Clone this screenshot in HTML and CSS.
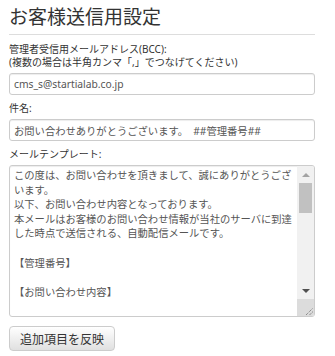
FILE: index.html
```html
<!DOCTYPE html>
<html lang="ja">
<head>
<meta charset="utf-8">
<title>お客様送信用設定</title>
<link rel="stylesheet" href="styles.css">
</head>
<body>
<div class="page">
  <h1 class="title">お客様送信用設定</h1>
  <hr class="rule">
  <div class="field field-first">
    <label class="label" for="bcc">管理者受信用メールアドレス(BCC):<br>(複数の場合は半角カンマ「,」でつなげてください)</label>
    <input class="input" id="bcc" type="text" value="cms_s@startialab.co.jp">
  </div>
  <div class="field">
    <label class="label" for="subject">件名:</label>
    <input class="input" id="subject" type="text" value="お問い合わせありがとうございます。　##管理番号##">
  </div>
  <div class="field">
    <label class="label" for="tpl">メールテンプレート:</label>
    <div class="tpl-box">
      <textarea class="textarea" id="tpl" wrap="off">この度は、お問い合わせを頂きまして、誠にありがとうござ
います。
以下、お問い合わせ内容となっております。
本メールはお客様のお問い合わせ情報が当社のサーバに到達
した時点で送信される、自動配信メールです。

【管理番号】

【お問い合わせ内容】

【お名前】

【メールアドレス】
</textarea>
      <div class="sbar" aria-hidden="true">
        <div class="sbar-btn"><span class="arrow arrow-up"></span></div>
        <div class="sbar-track"><div class="sbar-thumb"></div></div>
        <div class="sbar-btn"><span class="arrow arrow-down"></span></div>
        <div class="sbar-corner">
          <svg width="17" height="17" viewBox="0 0 17 17">
            <line x1="9" y1="16" x2="16" y2="9" stroke="#6a6a6a" stroke-width="1" stroke-dasharray="1 1"/>
            <line x1="12.5" y1="16" x2="16" y2="12.5" stroke="#6a6a6a" stroke-width="1" stroke-dasharray="1 1"/>
          </svg>
        </div>
      </div>
    </div>
  </div>
  <button class="btn" type="button">追加項目を反映</button>
</div>
</body>
</html>
```

FILE: styles.css
```css
html, body {
  margin: 0;
  padding: 0;
  background: #fff;
}

body {
  font-family: "Noto Sans", "Noto Sans CJK JP", sans-serif;
  color: #333;
}

.page {
  width: 306px;
  padding: 4px 0 0 9px;
}

.title {
  margin: 0;
  font-size: 19px;
  line-height: 24px;
  font-weight: normal;
  color: #333;
  font-family: "Noto Sans CJK JP", sans-serif;
}

.rule {
  margin: 6px 0 0;
  height: 0;
  border: 0;
  border-top: 1px solid #ddd;
}

.field {
  margin-top: 7px;
}

.field-first {
  margin-top: 8px;
}

.label {
  display: block;
  font-size: 10px;
  line-height: 13px;
  margin-bottom: 4px;
  color: #333;
}

.input {
  display: block;
  box-sizing: border-box;
  width: 100%;
  height: 22px;
  margin: 0;
  padding: 0 4px;
  border: 1px solid #ccc;
  border-radius: 3px;
  box-shadow: inset 0 1px 1px rgba(0, 0, 0, 0.075);
  font-family: "Noto Sans", "Noto Sans CJK JP", sans-serif;
  font-size: 10.3px;
  color: #555;
  background: #fff;
  outline: none;
}

.tpl-box {
  display: flex;
  box-sizing: border-box;
  height: 152px;
  border: 1px solid #ccc;
  border-radius: 3px;
  overflow: hidden;
  box-shadow: inset 0 1px 1px rgba(0, 0, 0, 0.075);
}

.textarea {
  flex: 1;
  min-width: 0;
  display: block;
  box-sizing: border-box;
  height: 100%;
  margin: 0;
  padding: 2px 4px;
  border: 0;
  font-family: "Noto Sans CJK JP", sans-serif;
  font-size: 10.3px;
  line-height: 14.6px;
  color: #555;
  background: transparent;
  white-space: pre;
  overflow: hidden;
  resize: none;
  outline: none;
}

.sbar {
  flex: 0 0 17px;
  display: flex;
  flex-direction: column;
  background: #f1f1f1;
}

.sbar-btn {
  flex: 0 0 17px;
  display: flex;
  align-items: center;
  justify-content: center;
}

.arrow {
  width: 0;
  height: 0;
  border-left: 4px solid transparent;
  border-right: 4px solid transparent;
}

.arrow-up {
  border-bottom: 4px solid #a3a3a3;
}

.arrow-down {
  border-top: 4px solid #505050;
}

.sbar-track {
  flex: 1;
  padding: 0 2px;
}

.sbar-thumb {
  height: 30px;
  background: #c1c1c1;
}

.sbar-corner {
  flex: 0 0 17px;
  height: 17px;
  background: #dcdcdc;
}

.sbar-corner svg {
  display: block;
}

.btn {
  display: block;
  box-sizing: border-box;
  height: 25px;
  margin-top: 9px;
  padding: 0 10px;
  border: 1px solid #ccc;
  border-radius: 4px;
  background: linear-gradient(to bottom, #ffffff 0%, #e0e0e0 100%);
  font-family: "Noto Sans CJK JP", sans-serif;
  font-size: 12px;
  line-height: 23px;
  color: #333;
  cursor: pointer;
}
```
